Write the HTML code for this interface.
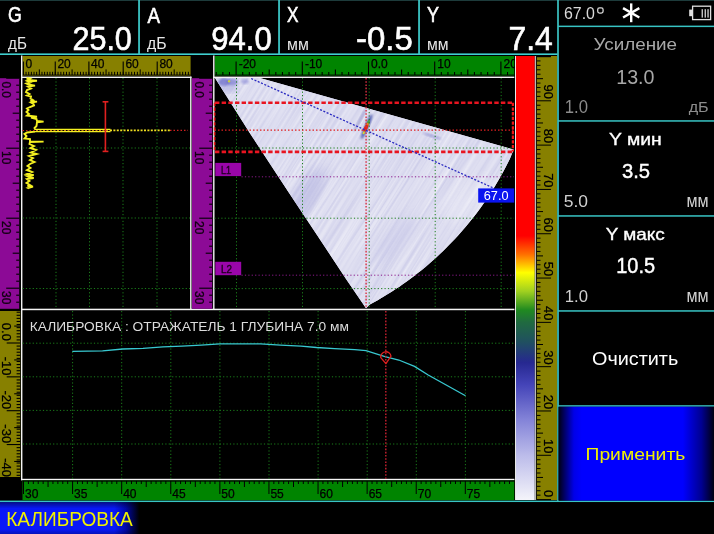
<!DOCTYPE html>
<html><head><meta charset="utf-8"><style>
html,body{margin:0;padding:0;background:#000;}
body{width:714px;height:534px;overflow:hidden;position:relative;}
svg{position:absolute;left:0;top:0;font-family:"Liberation Sans",sans-serif;will-change:transform;}
</style></head><body>
<svg width="714" height="534" viewBox="0 0 714 534">
<defs>
<linearGradient id="cbar" x1="0" y1="0" x2="0" y2="1">
<stop offset="0" stop-color="#ff0000"/><stop offset="0.405" stop-color="#ff0000"/>
<stop offset="0.447" stop-color="#ff7000"/><stop offset="0.488" stop-color="#ffff00"/>
<stop offset="0.53" stop-color="#a0d020"/><stop offset="0.572" stop-color="#208a20"/>
<stop offset="0.6" stop-color="#206a40"/><stop offset="0.644" stop-color="#205060"/><stop offset="0.69" stop-color="#262890"/>
<stop offset="0.74" stop-color="#4444b8"/><stop offset="0.82" stop-color="#8484d8"/>
<stop offset="0.9" stop-color="#bcbcea"/><stop offset="1" stop-color="#f4f4fa"/>
</linearGradient>
<linearGradient id="btn" x1="558.4" y1="0" x2="714" y2="0" gradientUnits="userSpaceOnUse">
<stop offset="0" stop-color="#000010"/><stop offset="0.04" stop-color="#000068"/><stop offset="0.1" stop-color="#0000e8"/>
<stop offset="0.15" stop-color="#0000ff"/><stop offset="0.8" stop-color="#0000ff"/>
<stop offset="0.92" stop-color="#000090"/><stop offset="1" stop-color="#000010"/>
</linearGradient>
<linearGradient id="stat" x1="0" y1="0" x2="714" y2="0" gradientUnits="userSpaceOnUse">
<stop offset="0" stop-color="#0818f8"/><stop offset="0.16" stop-color="#0818f8"/>
<stop offset="0.176" stop-color="#0008a8"/><stop offset="0.195" stop-color="#000000"/>
</linearGradient>
<linearGradient id="statv" x1="0" y1="0" x2="0" y2="1">
<stop offset="0" stop-color="#000" stop-opacity="0.45"/><stop offset="0.2" stop-color="#000" stop-opacity="0"/>
<stop offset="0.85" stop-color="#000" stop-opacity="0"/><stop offset="1" stop-color="#000" stop-opacity="0.25"/>
</linearGradient>
<linearGradient id="fang" x1="0" y1="0" x2="1" y2="1">
<stop offset="0" stop-color="#c8c8ec"/><stop offset="0.3" stop-color="#dcdcf2"/><stop offset="1" stop-color="#e4e4f4"/>
</linearGradient>
<pattern id="streaks" width="6" height="6" patternUnits="userSpaceOnUse" patternTransform="rotate(35)">
<rect width="6" height="6" fill="none"/><rect width="1.5" height="6" fill="#b8b8e0"/>
</pattern>
<linearGradient id="fanwhite" x1="214" y1="0" x2="514" y2="0" gradientUnits="userSpaceOnUse">
<stop offset="0" stop-color="#e8e8f6" stop-opacity="0"/><stop offset="0.35" stop-color="#e8e8f6" stop-opacity="0.15"/><stop offset="1" stop-color="#ececf8" stop-opacity="0.6"/>
</linearGradient>
<filter id="blur1"><feGaussianBlur stdDeviation="1"/></filter>
<filter id="blur2"><feGaussianBlur stdDeviation="2.5"/></filter>
<filter id="blur4" x="-50%" y="-50%" width="200%" height="200%"><feGaussianBlur stdDeviation="6"/></filter>
<filter id="streakf" x="0" y="0" width="100%" height="100%" filterUnits="objectBoundingBox" color-interpolation-filters="sRGB">
<feTurbulence type="fractalNoise" baseFrequency="0.008 0.4" numOctaves="2" seed="7"/>
<feColorMatrix type="matrix" values="0.18 0 0 0 0.775  0.18 0 0 0 0.775  0.08 0 0 0 0.9  0 0 0 0 1"/>
</filter>
</defs>
<rect width="714" height="534" fill="#000"/>
<rect x="0.00" y="0.00" width="714.00" height="1.00" fill="#1d3b3b" />
<rect x="0.00" y="53.40" width="557.50" height="1.60" fill="#3fcfcf" />
<rect x="138.20" y="0.00" width="1.70" height="54.00" fill="#3fcfcf" />
<rect x="278.20" y="0.00" width="1.70" height="54.00" fill="#3fcfcf" />
<rect x="418.20" y="0.00" width="1.70" height="54.00" fill="#3fcfcf" />
<rect x="557.20" y="0.00" width="1.60" height="501.50" fill="#3fcfcf" />
<rect x="558.00" y="25.60" width="156.00" height="1.50" fill="#38c4c4" />
<rect x="558.00" y="120.20" width="156.00" height="1.50" fill="#38c4c4" />
<rect x="558.00" y="215.20" width="156.00" height="1.50" fill="#38c4c4" />
<rect x="558.00" y="310.20" width="156.00" height="1.50" fill="#38c4c4" />
<rect x="558.00" y="405.20" width="156.00" height="1.50" fill="#38c4c4" />
<rect x="0.00" y="500.60" width="714.00" height="1.60" fill="#38c4c4" />
<text transform="translate(7.90,22.28) scale(0.795,1)" font-size="22.32" font-weight="normal" fill="#ffffff" stroke="#ffffff" stroke-width="0.6">G</text>
<text transform="translate(8.00,48.91) scale(0.895,1)" font-size="17.02" font-weight="normal" fill="#e8e8e8" >дБ</text>
<text transform="translate(72.40,50.07) scale(0.921,1)" font-size="33.19" font-weight="normal" fill="#ffffff" stroke="#ffffff" stroke-width="0.6">25.0</text>
<text transform="translate(147.50,22.50) scale(0.848,1)" font-size="22.09" font-weight="normal" fill="#ffffff" stroke="#ffffff" stroke-width="0.6">A</text>
<text transform="translate(147.00,48.91) scale(0.928,1)" font-size="17.02" font-weight="normal" fill="#e8e8e8" >дБ</text>
<text transform="translate(211.20,49.98) scale(0.957,1)" font-size="32.49" font-weight="normal" fill="#ffffff" stroke="#ffffff" stroke-width="0.6">94.0</text>
<text transform="translate(287.00,22.40) scale(0.770,1)" font-size="22.38" font-weight="normal" fill="#ffffff" stroke="#ffffff" stroke-width="0.6">X</text>
<text transform="translate(287.00,50.40) scale(0.910,1)" font-size="17.42" font-weight="normal" fill="#e8e8e8" >мм</text>
<text transform="translate(356.10,49.77) scale(1.009,1)" font-size="32.63" font-weight="normal" fill="#ffffff" stroke="#ffffff" stroke-width="0.6">-0.5</text>
<text transform="translate(427.00,22.40) scale(0.804,1)" font-size="22.38" font-weight="normal" fill="#ffffff" stroke="#ffffff" stroke-width="0.6">Y</text>
<text transform="translate(427.00,50.40) scale(0.902,1)" font-size="17.42" font-weight="normal" fill="#e8e8e8" >мм</text>
<text transform="translate(508.40,50.00) scale(0.955,1)" font-size="33.43" font-weight="normal" fill="#ffffff" stroke="#ffffff" stroke-width="0.6">7.4</text>
<text transform="translate(563.90,19.03) scale(0.920,1)" font-size="17.37" font-weight="normal" fill="#d8d8d8" >67.0</text>
<rect x="597.7" y="7.9" width="5.4" height="5.2" rx="1.8" fill="none" stroke="#d8d8d8" stroke-width="1.3"/>
<line x1="631.20" y1="3.40" x2="631.20" y2="22.20" stroke="#ffffff" stroke-width="2.4" />
<line x1="623.06" y1="8.10" x2="639.34" y2="17.50" stroke="#ffffff" stroke-width="2.4" />
<line x1="639.34" y1="8.10" x2="623.06" y2="17.50" stroke="#ffffff" stroke-width="2.4" />
<rect x="692.6" y="6.2" width="18" height="13.4" fill="none" stroke="#e0e0e0" stroke-width="1.3"/>
<rect x="689.20" y="9.60" width="3.40" height="6.60" fill="#e0e0e0" />
<rect x="701.60" y="9.20" width="1.30" height="8.40" fill="#d8d8d8" />
<rect x="704.60" y="9.20" width="1.30" height="8.40" fill="#d8d8d8" />
<rect x="707.40" y="9.20" width="1.30" height="8.40" fill="#d8d8d8" />
<text transform="translate(593.60,50.14) scale(1.144,1)" font-size="16.48" font-weight="normal" fill="#a8a8a8" >Усиление</text>
<text transform="translate(616.20,83.79) scale(0.935,1)" font-size="21.05" font-weight="normal" fill="#a8a8a8" >13.0</text>
<text transform="translate(564.80,112.82) scale(0.916,1)" font-size="18.22" font-weight="normal" fill="#8c8c8c" >1.0</text>
<text transform="translate(688.70,111.52) scale(1.076,1)" font-size="14.99" font-weight="normal" fill="#8c8c8c" >дБ</text>
<text transform="translate(609.10,144.80) scale(1.199,1)" font-size="16.13" font-weight="normal" fill="#ffffff" stroke="#ffffff" stroke-width="0.35">Y мин</text>
<text transform="translate(621.90,177.79) scale(0.961,1)" font-size="21.05" font-weight="normal" fill="#ffffff" stroke="#ffffff" stroke-width="0.45">3.5</text>
<text transform="translate(563.70,207.23) scale(1.015,1)" font-size="17.23" font-weight="normal" fill="#d0d0d0" >5.0</text>
<text transform="translate(686.50,207.40) scale(0.897,1)" font-size="17.99" font-weight="normal" fill="#d0d0d0" >мм</text>
<text transform="translate(605.80,239.64) scale(1.190,1)" font-size="15.90" font-weight="normal" fill="#ffffff" stroke="#ffffff" stroke-width="0.35">Y макс</text>
<text transform="translate(616.20,273.38) scale(0.913,1)" font-size="21.89" font-weight="normal" fill="#ffffff" stroke="#ffffff" stroke-width="0.45">10.5</text>
<text transform="translate(564.80,302.23) scale(0.969,1)" font-size="17.23" font-weight="normal" fill="#d0d0d0" >1.0</text>
<text transform="translate(686.50,302.40) scale(0.897,1)" font-size="17.99" font-weight="normal" fill="#d0d0d0" >мм</text>
<text transform="translate(592.00,364.92) scale(1.114,1)" font-size="17.80" font-weight="normal" fill="#ffffff" >Очистить</text>
<rect x="558.4" y="406.7" width="155.6" height="93.9" fill="url(#btn)"/>
<text transform="translate(585.50,459.90) scale(1.117,1)" font-size="17.30" font-weight="normal" fill="#f0f000" >Применить</text>
<rect x="0" y="502.2" width="714" height="31.8" fill="url(#stat)"/><rect x="0" y="502.2" width="150" height="31.8" fill="url(#statv)"/>
<text transform="translate(6.20,526.20) scale(0.965,1)" font-size="19.77" font-weight="normal" fill="#f0f000" >КАЛИБРОВКА</text>
<rect x="22.60" y="56.00" width="168.00" height="20.00" fill="#878000" />
<rect x="22.60" y="74.60" width="168.00" height="1.00" fill="#000" />
<line x1="23.40" y1="71.80" x2="23.40" y2="75.00" stroke="#000" stroke-width="1.0" />
<line x1="26.05" y1="71.80" x2="26.05" y2="75.00" stroke="#000" stroke-width="1.0" />
<line x1="28.71" y1="71.80" x2="28.71" y2="75.00" stroke="#000" stroke-width="1.0" />
<line x1="31.36" y1="71.80" x2="31.36" y2="75.00" stroke="#000" stroke-width="1.0" />
<line x1="34.02" y1="71.80" x2="34.02" y2="75.00" stroke="#000" stroke-width="1.0" />
<line x1="36.67" y1="71.80" x2="36.67" y2="75.00" stroke="#000" stroke-width="1.0" />
<line x1="39.33" y1="69.40" x2="39.33" y2="75.00" stroke="#000" stroke-width="1.0" />
<line x1="41.98" y1="71.80" x2="41.98" y2="75.00" stroke="#000" stroke-width="1.0" />
<line x1="44.63" y1="71.80" x2="44.63" y2="75.00" stroke="#000" stroke-width="1.0" />
<line x1="47.29" y1="71.80" x2="47.29" y2="75.00" stroke="#000" stroke-width="1.0" />
<line x1="49.94" y1="71.80" x2="49.94" y2="75.00" stroke="#000" stroke-width="1.0" />
<line x1="52.60" y1="71.80" x2="52.60" y2="75.00" stroke="#000" stroke-width="1.0" />
<line x1="55.25" y1="71.80" x2="55.25" y2="75.00" stroke="#000" stroke-width="1.0" />
<line x1="58.05" y1="71.80" x2="58.05" y2="75.00" stroke="#000" stroke-width="1.0" />
<line x1="60.86" y1="71.80" x2="60.86" y2="75.00" stroke="#000" stroke-width="1.0" />
<line x1="63.66" y1="71.80" x2="63.66" y2="75.00" stroke="#000" stroke-width="1.0" />
<line x1="66.47" y1="71.80" x2="66.47" y2="75.00" stroke="#000" stroke-width="1.0" />
<line x1="69.27" y1="71.80" x2="69.27" y2="75.00" stroke="#000" stroke-width="1.0" />
<line x1="72.08" y1="69.40" x2="72.08" y2="75.00" stroke="#000" stroke-width="1.0" />
<line x1="74.88" y1="71.80" x2="74.88" y2="75.00" stroke="#000" stroke-width="1.0" />
<line x1="77.68" y1="71.80" x2="77.68" y2="75.00" stroke="#000" stroke-width="1.0" />
<line x1="80.49" y1="71.80" x2="80.49" y2="75.00" stroke="#000" stroke-width="1.0" />
<line x1="83.29" y1="71.80" x2="83.29" y2="75.00" stroke="#000" stroke-width="1.0" />
<line x1="86.10" y1="71.80" x2="86.10" y2="75.00" stroke="#000" stroke-width="1.0" />
<line x1="88.90" y1="71.80" x2="88.90" y2="75.00" stroke="#000" stroke-width="1.0" />
<line x1="91.76" y1="71.80" x2="91.76" y2="75.00" stroke="#000" stroke-width="1.0" />
<line x1="94.62" y1="71.80" x2="94.62" y2="75.00" stroke="#000" stroke-width="1.0" />
<line x1="97.48" y1="71.80" x2="97.48" y2="75.00" stroke="#000" stroke-width="1.0" />
<line x1="100.33" y1="71.80" x2="100.33" y2="75.00" stroke="#000" stroke-width="1.0" />
<line x1="103.19" y1="71.80" x2="103.19" y2="75.00" stroke="#000" stroke-width="1.0" />
<line x1="106.05" y1="69.40" x2="106.05" y2="75.00" stroke="#000" stroke-width="1.0" />
<line x1="108.91" y1="71.80" x2="108.91" y2="75.00" stroke="#000" stroke-width="1.0" />
<line x1="111.77" y1="71.80" x2="111.77" y2="75.00" stroke="#000" stroke-width="1.0" />
<line x1="114.62" y1="71.80" x2="114.62" y2="75.00" stroke="#000" stroke-width="1.0" />
<line x1="117.48" y1="71.80" x2="117.48" y2="75.00" stroke="#000" stroke-width="1.0" />
<line x1="120.34" y1="71.80" x2="120.34" y2="75.00" stroke="#000" stroke-width="1.0" />
<line x1="123.20" y1="71.80" x2="123.20" y2="75.00" stroke="#000" stroke-width="1.0" />
<line x1="126.03" y1="71.80" x2="126.03" y2="75.00" stroke="#000" stroke-width="1.0" />
<line x1="128.87" y1="71.80" x2="128.87" y2="75.00" stroke="#000" stroke-width="1.0" />
<line x1="131.70" y1="71.80" x2="131.70" y2="75.00" stroke="#000" stroke-width="1.0" />
<line x1="134.53" y1="71.80" x2="134.53" y2="75.00" stroke="#000" stroke-width="1.0" />
<line x1="137.37" y1="71.80" x2="137.37" y2="75.00" stroke="#000" stroke-width="1.0" />
<line x1="140.20" y1="69.40" x2="140.20" y2="75.00" stroke="#000" stroke-width="1.0" />
<line x1="143.03" y1="71.80" x2="143.03" y2="75.00" stroke="#000" stroke-width="1.0" />
<line x1="145.87" y1="71.80" x2="145.87" y2="75.00" stroke="#000" stroke-width="1.0" />
<line x1="148.70" y1="71.80" x2="148.70" y2="75.00" stroke="#000" stroke-width="1.0" />
<line x1="151.53" y1="71.80" x2="151.53" y2="75.00" stroke="#000" stroke-width="1.0" />
<line x1="154.37" y1="71.80" x2="154.37" y2="75.00" stroke="#000" stroke-width="1.0" />
<line x1="157.20" y1="71.80" x2="157.20" y2="75.00" stroke="#000" stroke-width="1.0" />
<line x1="160.03" y1="71.80" x2="160.03" y2="75.00" stroke="#000" stroke-width="1.0" />
<line x1="162.87" y1="71.80" x2="162.87" y2="75.00" stroke="#000" stroke-width="1.0" />
<line x1="165.70" y1="71.80" x2="165.70" y2="75.00" stroke="#000" stroke-width="1.0" />
<line x1="168.53" y1="71.80" x2="168.53" y2="75.00" stroke="#000" stroke-width="1.0" />
<line x1="171.37" y1="71.80" x2="171.37" y2="75.00" stroke="#000" stroke-width="1.0" />
<line x1="174.20" y1="69.40" x2="174.20" y2="75.00" stroke="#000" stroke-width="1.0" />
<line x1="177.03" y1="71.80" x2="177.03" y2="75.00" stroke="#000" stroke-width="1.0" />
<line x1="179.87" y1="71.80" x2="179.87" y2="75.00" stroke="#000" stroke-width="1.0" />
<line x1="182.70" y1="71.80" x2="182.70" y2="75.00" stroke="#000" stroke-width="1.0" />
<line x1="185.53" y1="71.80" x2="185.53" y2="75.00" stroke="#000" stroke-width="1.0" />
<line x1="188.37" y1="71.80" x2="188.37" y2="75.00" stroke="#000" stroke-width="1.0" />
<line x1="23.40" y1="61.60" x2="23.40" y2="75.00" stroke="#000" stroke-width="1.1" />
<text x="25.60" y="67.70" font-size="12" fill="#000" text-anchor="start" stroke="#000" stroke-width="0.25">0</text>
<line x1="55.25" y1="61.60" x2="55.25" y2="75.00" stroke="#000" stroke-width="1.1" />
<text x="57.45" y="67.70" font-size="12" fill="#000" text-anchor="start" stroke="#000" stroke-width="0.25">20</text>
<line x1="88.90" y1="61.60" x2="88.90" y2="75.00" stroke="#000" stroke-width="1.1" />
<text x="91.10" y="67.70" font-size="12" fill="#000" text-anchor="start" stroke="#000" stroke-width="0.25">40</text>
<line x1="123.20" y1="61.60" x2="123.20" y2="75.00" stroke="#000" stroke-width="1.1" />
<text x="125.40" y="67.70" font-size="12" fill="#000" text-anchor="start" stroke="#000" stroke-width="0.25">60</text>
<line x1="157.20" y1="61.60" x2="157.20" y2="75.00" stroke="#000" stroke-width="1.1" />
<text x="159.40" y="67.70" font-size="12" fill="#000" text-anchor="start" stroke="#000" stroke-width="0.25">80</text>
<rect x="21.00" y="55.50" width="1.40" height="254.50" fill="#f4f4f4" />
<rect x="21.00" y="76.60" width="170.40" height="1.40" fill="#f4f4f4" />
<rect x="190.10" y="76.60" width="1.40" height="233.00" fill="#f4f4f4" />
<rect x="21.00" y="308.70" width="493.40" height="1.50" fill="#f4f4f4" />
<rect x="0.00" y="78.20" width="19.20" height="230.60" fill="#8c0a96" />
<rect x="192.00" y="78.20" width="20.20" height="230.60" fill="#8c0a96" />
<line x1="6.20" y1="78.20" x2="19.20" y2="78.20" stroke="#000" stroke-width="1.1" />
<line x1="16.20" y1="85.20" x2="19.20" y2="85.20" stroke="#000" stroke-width="1.1" />
<line x1="16.20" y1="92.20" x2="19.20" y2="92.20" stroke="#000" stroke-width="1.1" />
<line x1="16.20" y1="99.20" x2="19.20" y2="99.20" stroke="#000" stroke-width="1.1" />
<line x1="16.20" y1="106.20" x2="19.20" y2="106.20" stroke="#000" stroke-width="1.1" />
<line x1="12.70" y1="113.20" x2="19.20" y2="113.20" stroke="#000" stroke-width="1.1" />
<line x1="16.20" y1="120.20" x2="19.20" y2="120.20" stroke="#000" stroke-width="1.1" />
<line x1="16.20" y1="127.20" x2="19.20" y2="127.20" stroke="#000" stroke-width="1.1" />
<line x1="16.20" y1="134.20" x2="19.20" y2="134.20" stroke="#000" stroke-width="1.1" />
<line x1="16.20" y1="141.20" x2="19.20" y2="141.20" stroke="#000" stroke-width="1.1" />
<line x1="6.20" y1="148.20" x2="19.20" y2="148.20" stroke="#000" stroke-width="1.1" />
<line x1="16.20" y1="155.20" x2="19.20" y2="155.20" stroke="#000" stroke-width="1.1" />
<line x1="16.20" y1="162.20" x2="19.20" y2="162.20" stroke="#000" stroke-width="1.1" />
<line x1="16.20" y1="169.20" x2="19.20" y2="169.20" stroke="#000" stroke-width="1.1" />
<line x1="16.20" y1="176.20" x2="19.20" y2="176.20" stroke="#000" stroke-width="1.1" />
<line x1="12.70" y1="183.20" x2="19.20" y2="183.20" stroke="#000" stroke-width="1.1" />
<line x1="16.20" y1="190.20" x2="19.20" y2="190.20" stroke="#000" stroke-width="1.1" />
<line x1="16.20" y1="197.20" x2="19.20" y2="197.20" stroke="#000" stroke-width="1.1" />
<line x1="16.20" y1="204.20" x2="19.20" y2="204.20" stroke="#000" stroke-width="1.1" />
<line x1="16.20" y1="211.20" x2="19.20" y2="211.20" stroke="#000" stroke-width="1.1" />
<line x1="6.20" y1="218.20" x2="19.20" y2="218.20" stroke="#000" stroke-width="1.1" />
<line x1="16.20" y1="225.20" x2="19.20" y2="225.20" stroke="#000" stroke-width="1.1" />
<line x1="16.20" y1="232.20" x2="19.20" y2="232.20" stroke="#000" stroke-width="1.1" />
<line x1="16.20" y1="239.20" x2="19.20" y2="239.20" stroke="#000" stroke-width="1.1" />
<line x1="16.20" y1="246.20" x2="19.20" y2="246.20" stroke="#000" stroke-width="1.1" />
<line x1="12.70" y1="253.20" x2="19.20" y2="253.20" stroke="#000" stroke-width="1.1" />
<line x1="16.20" y1="260.20" x2="19.20" y2="260.20" stroke="#000" stroke-width="1.1" />
<line x1="16.20" y1="267.20" x2="19.20" y2="267.20" stroke="#000" stroke-width="1.1" />
<line x1="16.20" y1="274.20" x2="19.20" y2="274.20" stroke="#000" stroke-width="1.1" />
<line x1="16.20" y1="281.20" x2="19.20" y2="281.20" stroke="#000" stroke-width="1.1" />
<line x1="6.20" y1="288.20" x2="19.20" y2="288.20" stroke="#000" stroke-width="1.1" />
<line x1="16.20" y1="295.20" x2="19.20" y2="295.20" stroke="#000" stroke-width="1.1" />
<line x1="16.20" y1="302.20" x2="19.20" y2="302.20" stroke="#000" stroke-width="1.1" />
<text transform="translate(1.80,81.40) rotate(90)" font-size="11.9" fill="#100010" stroke="#100010" stroke-width="0.3">0.0</text>
<text transform="translate(1.80,151.10) rotate(90)" font-size="11.9" fill="#100010" stroke="#100010" stroke-width="0.3">10</text>
<text transform="translate(1.80,221.10) rotate(90)" font-size="11.9" fill="#100010" stroke="#100010" stroke-width="0.3">20</text>
<text transform="translate(1.80,291.10) rotate(90)" font-size="11.9" fill="#100010" stroke="#100010" stroke-width="0.3">30</text>
<line x1="199.20" y1="78.20" x2="212.20" y2="78.20" stroke="#000" stroke-width="1.1" />
<line x1="209.20" y1="85.20" x2="212.20" y2="85.20" stroke="#000" stroke-width="1.1" />
<line x1="209.20" y1="92.20" x2="212.20" y2="92.20" stroke="#000" stroke-width="1.1" />
<line x1="209.20" y1="99.20" x2="212.20" y2="99.20" stroke="#000" stroke-width="1.1" />
<line x1="209.20" y1="106.20" x2="212.20" y2="106.20" stroke="#000" stroke-width="1.1" />
<line x1="205.70" y1="113.20" x2="212.20" y2="113.20" stroke="#000" stroke-width="1.1" />
<line x1="209.20" y1="120.20" x2="212.20" y2="120.20" stroke="#000" stroke-width="1.1" />
<line x1="209.20" y1="127.20" x2="212.20" y2="127.20" stroke="#000" stroke-width="1.1" />
<line x1="209.20" y1="134.20" x2="212.20" y2="134.20" stroke="#000" stroke-width="1.1" />
<line x1="209.20" y1="141.20" x2="212.20" y2="141.20" stroke="#000" stroke-width="1.1" />
<line x1="199.20" y1="148.20" x2="212.20" y2="148.20" stroke="#000" stroke-width="1.1" />
<line x1="209.20" y1="155.20" x2="212.20" y2="155.20" stroke="#000" stroke-width="1.1" />
<line x1="209.20" y1="162.20" x2="212.20" y2="162.20" stroke="#000" stroke-width="1.1" />
<line x1="209.20" y1="169.20" x2="212.20" y2="169.20" stroke="#000" stroke-width="1.1" />
<line x1="209.20" y1="176.20" x2="212.20" y2="176.20" stroke="#000" stroke-width="1.1" />
<line x1="205.70" y1="183.20" x2="212.20" y2="183.20" stroke="#000" stroke-width="1.1" />
<line x1="209.20" y1="190.20" x2="212.20" y2="190.20" stroke="#000" stroke-width="1.1" />
<line x1="209.20" y1="197.20" x2="212.20" y2="197.20" stroke="#000" stroke-width="1.1" />
<line x1="209.20" y1="204.20" x2="212.20" y2="204.20" stroke="#000" stroke-width="1.1" />
<line x1="209.20" y1="211.20" x2="212.20" y2="211.20" stroke="#000" stroke-width="1.1" />
<line x1="199.20" y1="218.20" x2="212.20" y2="218.20" stroke="#000" stroke-width="1.1" />
<line x1="209.20" y1="225.20" x2="212.20" y2="225.20" stroke="#000" stroke-width="1.1" />
<line x1="209.20" y1="232.20" x2="212.20" y2="232.20" stroke="#000" stroke-width="1.1" />
<line x1="209.20" y1="239.20" x2="212.20" y2="239.20" stroke="#000" stroke-width="1.1" />
<line x1="209.20" y1="246.20" x2="212.20" y2="246.20" stroke="#000" stroke-width="1.1" />
<line x1="205.70" y1="253.20" x2="212.20" y2="253.20" stroke="#000" stroke-width="1.1" />
<line x1="209.20" y1="260.20" x2="212.20" y2="260.20" stroke="#000" stroke-width="1.1" />
<line x1="209.20" y1="267.20" x2="212.20" y2="267.20" stroke="#000" stroke-width="1.1" />
<line x1="209.20" y1="274.20" x2="212.20" y2="274.20" stroke="#000" stroke-width="1.1" />
<line x1="209.20" y1="281.20" x2="212.20" y2="281.20" stroke="#000" stroke-width="1.1" />
<line x1="199.20" y1="288.20" x2="212.20" y2="288.20" stroke="#000" stroke-width="1.1" />
<line x1="209.20" y1="295.20" x2="212.20" y2="295.20" stroke="#000" stroke-width="1.1" />
<line x1="209.20" y1="302.20" x2="212.20" y2="302.20" stroke="#000" stroke-width="1.1" />
<text transform="translate(194.80,81.40) rotate(90)" font-size="11.9" fill="#100010" stroke="#100010" stroke-width="0.3">0.0</text>
<text transform="translate(194.80,151.10) rotate(90)" font-size="11.9" fill="#100010" stroke="#100010" stroke-width="0.3">10</text>
<text transform="translate(194.80,221.10) rotate(90)" font-size="11.9" fill="#100010" stroke="#100010" stroke-width="0.3">20</text>
<text transform="translate(194.80,291.10) rotate(90)" font-size="11.9" fill="#100010" stroke="#100010" stroke-width="0.3">30</text>
<line x1="56.00" y1="78.00" x2="56.00" y2="308.80" stroke="#1a7e1a" stroke-width="1" stroke-dasharray="1.2 2.2"/>
<line x1="89.50" y1="78.00" x2="89.50" y2="308.80" stroke="#1a7e1a" stroke-width="1" stroke-dasharray="1.2 2.2"/>
<line x1="123.00" y1="78.00" x2="123.00" y2="308.80" stroke="#1a7e1a" stroke-width="1" stroke-dasharray="1.2 2.2"/>
<line x1="157.00" y1="78.00" x2="157.00" y2="308.80" stroke="#1a7e1a" stroke-width="1" stroke-dasharray="1.2 2.2"/>
<line x1="22.50" y1="148.00" x2="190.00" y2="148.00" stroke="#1a7e1a" stroke-width="1" stroke-dasharray="1.2 2.2"/>
<line x1="22.50" y1="218.00" x2="190.00" y2="218.00" stroke="#1a7e1a" stroke-width="1" stroke-dasharray="1.2 2.2"/>
<line x1="22.50" y1="288.50" x2="190.00" y2="288.50" stroke="#1a7e1a" stroke-width="1" stroke-dasharray="1.2 2.2"/>
<polyline points="26.5,78.0 30.0,78.5 27.5,80.0 37.0,80.8 28.0,81.5 30.0,82.5 26.5,83.5 28.5,84.5 35.0,85.6 28.0,86.5 31.0,88.5 27.0,90.0 26.0,92.0 29.5,94.0 27.0,95.5 31.0,96.5 30.5,98.5 33.0,100.0 30.5,101.0 37.0,101.6 31.0,102.5 33.5,104.0 34.0,105.5 30.0,107.0 27.0,108.5 28.5,110.0 26.5,112.0 29.0,114.0 27.0,115.5 31.0,116.0 37.0,116.8 31.0,117.5 36.5,119.0 37.0,121.0 43.6,121.6 37.0,122.2 36.5,126.0 34.5,128.0 35.0,129.5" fill="none" stroke="#f4f020" stroke-width="1.9" stroke-linejoin="miter"/>
<polyline points="35.0,131.6 27.0,132.5 24.5,134.0 26.5,136.0 24.5,138.5 30.0,139.0 30.0,141.5 43.6,141.6 30.0,142.0 29.5,144.0 34.0,146.0 30.5,148.0 36.0,150.0 31.0,152.5 36.5,154.0 29.0,156.0 33.0,158.0 30.0,160.0 34.5,162.0 30.0,164.0 27.5,166.0 30.5,168.0 27.0,170.0 32.0,172.0 27.0,174.0 33.7,175.0 27.0,176.0 29.0,177.0 33.7,178.0 27.0,179.0 29.5,181.0 26.5,183.0 30.0,185.0 27.5,186.0 33.0,186.5 28.0,188.0 29.0,188.5" fill="none" stroke="#f4f020" stroke-width="1.9" stroke-linejoin="miter"/>
<line x1="22.50" y1="130.50" x2="35.00" y2="130.50" stroke="#c02020" stroke-width="1.0" stroke-dasharray="1.5 2"/>
<line x1="34.50" y1="129.30" x2="110.50" y2="129.30" stroke="#f4f020" stroke-width="1.3" />
<line x1="34.50" y1="131.70" x2="110.50" y2="131.70" stroke="#f4f020" stroke-width="1.3" />
<line x1="36.00" y1="130.50" x2="110.00" y2="130.50" stroke="#d08010" stroke-width="1.0" stroke-dasharray="2 1.5"/>
<line x1="110.00" y1="130.40" x2="170.00" y2="130.40" stroke="#f0e020" stroke-width="1.6" stroke-dasharray="2 1.4"/>
<line x1="170.00" y1="130.30" x2="188.00" y2="130.30" stroke="#d02020" stroke-width="1.2" stroke-dasharray="1.5 2"/>
<line x1="105.40" y1="101.60" x2="105.40" y2="151.60" stroke="#e02020" stroke-width="1.6" />
<line x1="102.60" y1="101.80" x2="108.40" y2="101.80" stroke="#e02020" stroke-width="1.6" />
<line x1="102.60" y1="151.40" x2="108.40" y2="151.40" stroke="#e02020" stroke-width="1.6" />
<rect x="214.80" y="56.00" width="299.40" height="20.00" fill="#008400" />
<rect x="214.80" y="74.60" width="299.40" height="1.00" fill="#000" />
<rect x="213.10" y="55.50" width="1.40" height="254.50" fill="#f4f4f4" />
<rect x="213.10" y="76.60" width="301.20" height="1.40" fill="#f4f4f4" />
<line x1="216.24" y1="72.00" x2="216.24" y2="75.00" stroke="#000" stroke-width="1.1" />
<line x1="222.86" y1="72.00" x2="222.86" y2="75.00" stroke="#000" stroke-width="1.1" />
<line x1="229.48" y1="72.00" x2="229.48" y2="75.00" stroke="#000" stroke-width="1.1" />
<line x1="236.10" y1="61.60" x2="236.10" y2="75.00" stroke="#000" stroke-width="1.1" />
<line x1="242.72" y1="72.00" x2="242.72" y2="75.00" stroke="#000" stroke-width="1.1" />
<line x1="249.34" y1="72.00" x2="249.34" y2="75.00" stroke="#000" stroke-width="1.1" />
<line x1="255.96" y1="72.00" x2="255.96" y2="75.00" stroke="#000" stroke-width="1.1" />
<line x1="262.58" y1="72.00" x2="262.58" y2="75.00" stroke="#000" stroke-width="1.1" />
<line x1="269.20" y1="69.40" x2="269.20" y2="75.00" stroke="#000" stroke-width="1.1" />
<line x1="275.82" y1="72.00" x2="275.82" y2="75.00" stroke="#000" stroke-width="1.1" />
<line x1="282.44" y1="72.00" x2="282.44" y2="75.00" stroke="#000" stroke-width="1.1" />
<line x1="289.06" y1="72.00" x2="289.06" y2="75.00" stroke="#000" stroke-width="1.1" />
<line x1="295.68" y1="72.00" x2="295.68" y2="75.00" stroke="#000" stroke-width="1.1" />
<line x1="302.30" y1="61.60" x2="302.30" y2="75.00" stroke="#000" stroke-width="1.1" />
<line x1="308.92" y1="72.00" x2="308.92" y2="75.00" stroke="#000" stroke-width="1.1" />
<line x1="315.54" y1="72.00" x2="315.54" y2="75.00" stroke="#000" stroke-width="1.1" />
<line x1="322.16" y1="72.00" x2="322.16" y2="75.00" stroke="#000" stroke-width="1.1" />
<line x1="328.78" y1="72.00" x2="328.78" y2="75.00" stroke="#000" stroke-width="1.1" />
<line x1="335.40" y1="69.40" x2="335.40" y2="75.00" stroke="#000" stroke-width="1.1" />
<line x1="342.02" y1="72.00" x2="342.02" y2="75.00" stroke="#000" stroke-width="1.1" />
<line x1="348.64" y1="72.00" x2="348.64" y2="75.00" stroke="#000" stroke-width="1.1" />
<line x1="355.26" y1="72.00" x2="355.26" y2="75.00" stroke="#000" stroke-width="1.1" />
<line x1="361.88" y1="72.00" x2="361.88" y2="75.00" stroke="#000" stroke-width="1.1" />
<line x1="368.50" y1="61.60" x2="368.50" y2="75.00" stroke="#000" stroke-width="1.1" />
<line x1="375.12" y1="72.00" x2="375.12" y2="75.00" stroke="#000" stroke-width="1.1" />
<line x1="381.74" y1="72.00" x2="381.74" y2="75.00" stroke="#000" stroke-width="1.1" />
<line x1="388.36" y1="72.00" x2="388.36" y2="75.00" stroke="#000" stroke-width="1.1" />
<line x1="394.98" y1="72.00" x2="394.98" y2="75.00" stroke="#000" stroke-width="1.1" />
<line x1="401.60" y1="69.40" x2="401.60" y2="75.00" stroke="#000" stroke-width="1.1" />
<line x1="408.22" y1="72.00" x2="408.22" y2="75.00" stroke="#000" stroke-width="1.1" />
<line x1="414.84" y1="72.00" x2="414.84" y2="75.00" stroke="#000" stroke-width="1.1" />
<line x1="421.46" y1="72.00" x2="421.46" y2="75.00" stroke="#000" stroke-width="1.1" />
<line x1="428.08" y1="72.00" x2="428.08" y2="75.00" stroke="#000" stroke-width="1.1" />
<line x1="434.70" y1="61.60" x2="434.70" y2="75.00" stroke="#000" stroke-width="1.1" />
<line x1="441.32" y1="72.00" x2="441.32" y2="75.00" stroke="#000" stroke-width="1.1" />
<line x1="447.94" y1="72.00" x2="447.94" y2="75.00" stroke="#000" stroke-width="1.1" />
<line x1="454.56" y1="72.00" x2="454.56" y2="75.00" stroke="#000" stroke-width="1.1" />
<line x1="461.18" y1="72.00" x2="461.18" y2="75.00" stroke="#000" stroke-width="1.1" />
<line x1="467.80" y1="69.40" x2="467.80" y2="75.00" stroke="#000" stroke-width="1.1" />
<line x1="474.42" y1="72.00" x2="474.42" y2="75.00" stroke="#000" stroke-width="1.1" />
<line x1="481.04" y1="72.00" x2="481.04" y2="75.00" stroke="#000" stroke-width="1.1" />
<line x1="487.66" y1="72.00" x2="487.66" y2="75.00" stroke="#000" stroke-width="1.1" />
<line x1="494.28" y1="72.00" x2="494.28" y2="75.00" stroke="#000" stroke-width="1.1" />
<line x1="500.90" y1="61.60" x2="500.90" y2="75.00" stroke="#000" stroke-width="1.1" />
<line x1="507.52" y1="72.00" x2="507.52" y2="75.00" stroke="#000" stroke-width="1.1" />
<text x="238.70" y="67.90" font-size="12" fill="#000" text-anchor="start" stroke="#000" stroke-width="0.25">-20</text>
<text x="304.90" y="67.90" font-size="12" fill="#000" text-anchor="start" stroke="#000" stroke-width="0.25">-10</text>
<text x="371.10" y="67.90" font-size="12" fill="#000" text-anchor="start" stroke="#000" stroke-width="0.25">0.0</text>
<text x="437.30" y="67.90" font-size="12" fill="#000" text-anchor="start" stroke="#000" stroke-width="0.25">10</text>
<text x="503.50" y="67.90" font-size="12" fill="#000" text-anchor="start" stroke="#000" stroke-width="0.25">20</text>
<path d="M215.00,78.00 L260.00,78.00 L513.60,149.50 L509.92,158.77 L506.23,166.11 L502.55,173.02 L498.86,179.55 L495.18,185.76 L491.49,191.68 L487.81,197.33 L484.12,202.73 L480.44,207.92 L476.75,212.90 L473.06,217.69 L469.38,222.31 L465.69,226.76 L462.01,231.05 L458.32,235.20 L454.64,239.22 L450.95,243.10 L447.27,246.86 L443.59,250.51 L439.90,254.04 L436.22,257.46 L432.53,260.78 L428.85,264.00 L425.16,267.13 L421.48,270.17 L417.79,273.11 L414.11,275.98 L410.42,278.76 L406.74,281.46 L403.05,284.08 L399.37,286.63 L395.68,289.10 L392.00,291.50 L388.31,293.84 L384.62,296.10 L380.94,298.30 L377.25,300.44 L373.57,302.51 L369.88,304.52 L366.00,308.30 L346.70,280.00 L317.00,235.00 L287.10,190.00 L250.40,134.00 Z" fill="url(#fang)"/>
<g clip-path="url(#fanclip)"><g transform="rotate(-58 365 190)"><rect x="140" y="-40" width="460" height="460" filter="url(#streakf)"/></g><ellipse cx="224" cy="82" rx="6" ry="4" fill="#5050c0" opacity="0.6" filter="url(#blur1)"/><ellipse cx="232" cy="82" rx="6" ry="3.5" fill="#6060c8" opacity="0.55" filter="url(#blur1)"/><ellipse cx="245" cy="81.5" rx="4" ry="2.5" fill="#7878d0" opacity="0.5" filter="url(#blur1)"/><ellipse cx="228" cy="88" rx="10" ry="5" fill="#9090d8" opacity="0.35" filter="url(#blur2)"/><ellipse cx="305" cy="195" rx="32" ry="11" transform="rotate(-58 305 195)" fill="#a8a8dc" opacity="0.45" filter="url(#blur4)"/><ellipse cx="395" cy="240" rx="30" ry="9" transform="rotate(-50 395 240)" fill="#c0c0e6" opacity="0.4" filter="url(#blur4)"/><ellipse cx="360" cy="120" rx="13" ry="1.6" transform="rotate(-62 360 120)" fill="#6060b0" opacity="0.45" filter="url(#blur1)"/><ellipse cx="432" cy="136" rx="10" ry="1.4" transform="rotate(18 432 136)" fill="#6868c0" opacity="0.45" filter="url(#blur1)"/><ellipse cx="470" cy="200" rx="30" ry="14" transform="rotate(-40 470 200)" fill="#f4f4fa" opacity="0.35" filter="url(#blur4)"/><circle cx="229.1" cy="81.3" r="1.2" fill="#c8d040"/><g transform="translate(366.6,126.6) rotate(23)"><ellipse cx="0" cy="0" rx="2.2" ry="13.5" fill="#3848a8" opacity="0.85" filter="url(#blur1)"/><ellipse cx="0" cy="-3.5" rx="1.3" ry="4" fill="#50a040"/><ellipse cx="0" cy="-0.5" rx="1.5" ry="3.5" fill="#f07a20"/><ellipse cx="-0.2" cy="2" rx="1.8" ry="3.8" fill="#e02018"/><ellipse cx="-0.2" cy="6.8" rx="1" ry="1.6" fill="#d8d830"/></g></g>
<clipPath id="fanclip"><path d="M215.00,78.00 L260.00,78.00 L513.60,149.50 L509.92,158.77 L506.23,166.11 L502.55,173.02 L498.86,179.55 L495.18,185.76 L491.49,191.68 L487.81,197.33 L484.12,202.73 L480.44,207.92 L476.75,212.90 L473.06,217.69 L469.38,222.31 L465.69,226.76 L462.01,231.05 L458.32,235.20 L454.64,239.22 L450.95,243.10 L447.27,246.86 L443.59,250.51 L439.90,254.04 L436.22,257.46 L432.53,260.78 L428.85,264.00 L425.16,267.13 L421.48,270.17 L417.79,273.11 L414.11,275.98 L410.42,278.76 L406.74,281.46 L403.05,284.08 L399.37,286.63 L395.68,289.10 L392.00,291.50 L388.31,293.84 L384.62,296.10 L380.94,298.30 L377.25,300.44 L373.57,302.51 L369.88,304.52 L366.00,308.30 L346.70,280.00 L317.00,235.00 L287.10,190.00 L250.40,134.00 Z"/></clipPath>
<line x1="236.50" y1="78.00" x2="236.50" y2="309.00" stroke="#1a7e1a" stroke-width="1" stroke-dasharray="1.2 2.2"/>
<line x1="302.50" y1="78.00" x2="302.50" y2="309.00" stroke="#1a7e1a" stroke-width="1" stroke-dasharray="1.2 2.2"/>
<line x1="369.20" y1="78.00" x2="369.20" y2="309.00" stroke="#1a7e1a" stroke-width="1" stroke-dasharray="1.2 2.2"/>
<line x1="435.20" y1="78.00" x2="435.20" y2="309.00" stroke="#1a7e1a" stroke-width="1" stroke-dasharray="1.2 2.2"/>
<line x1="501.20" y1="78.00" x2="501.20" y2="309.00" stroke="#1a7e1a" stroke-width="1" stroke-dasharray="1.2 2.2"/>
<line x1="214.50" y1="148.00" x2="514.00" y2="148.00" stroke="#1a7e1a" stroke-width="1" stroke-dasharray="1.2 2.2"/>
<line x1="214.50" y1="218.20" x2="514.00" y2="218.20" stroke="#1a7e1a" stroke-width="1" stroke-dasharray="1.2 2.2"/>
<line x1="214.50" y1="288.60" x2="514.00" y2="288.60" stroke="#1a7e1a" stroke-width="1" stroke-dasharray="1.2 2.2"/>
<line x1="241.50" y1="176.80" x2="514.00" y2="176.80" stroke="#8c1a8c" stroke-width="1" stroke-dasharray="1.2 2.2"/>
<line x1="241.50" y1="275.20" x2="514.00" y2="275.20" stroke="#8c1a8c" stroke-width="1" stroke-dasharray="1.2 2.2"/>
<rect x="215.30" y="162.90" width="25.90" height="13.20" fill="#9a06aa" />
<rect x="215.30" y="261.80" width="25.90" height="13.40" fill="#9a06aa" />
<text transform="translate(221.00,173.80) scale(0.764,1)" font-size="11.77" font-weight="normal" fill="#200020" stroke="#200020" stroke-width="0.4">L1</text>
<text transform="translate(221.00,272.70) scale(0.852,1)" font-size="11.60" font-weight="normal" fill="#200020" stroke="#200020" stroke-width="0.4">L2</text>
<line x1="215.00" y1="102.70" x2="514.00" y2="102.70" stroke="#e81420" stroke-width="2.6" stroke-dasharray="4.4 2.25"/>
<line x1="215.00" y1="151.90" x2="514.00" y2="151.90" stroke="#e81420" stroke-width="2.6" stroke-dasharray="4.4 2.25"/>
<line x1="214.60" y1="102.70" x2="214.60" y2="151.60" stroke="#f02020" stroke-width="1.6" stroke-dasharray="3.3 1.6"/>
<line x1="512.90" y1="102.70" x2="512.90" y2="151.60" stroke="#f01414" stroke-width="2.2" stroke-dasharray="3.3 1.4"/>
<line x1="214.50" y1="130.10" x2="514.00" y2="130.10" stroke="#e02020" stroke-width="1.1" stroke-dasharray="1.5 2"/>
<line x1="366.10" y1="78.00" x2="366.10" y2="308.40" stroke="#d83040" stroke-width="1.4" stroke-dasharray="1.6 1.6"/>
<line x1="251.20" y1="78.50" x2="493.00" y2="187.80" stroke="#2828c0" stroke-width="1.3" stroke-dasharray="2 1.6"/>
<rect x="478.20" y="188.40" width="36.00" height="14.20" fill="#0a14f0" />
<text transform="translate(483.80,199.68) scale(1.045,1)" font-size="12.15" font-weight="normal" fill="#ffffff" >67.0</text>
<rect x="515.00" y="56.00" width="1.00" height="444.00" fill="#e8e8e8" />
<rect x="534.60" y="56.00" width="1.20" height="444.00" fill="#e8e8e8" />
<rect x="516" y="56" width="18.6" height="444" fill="url(#cbar)"/>
<rect x="536.30" y="56.00" width="0.90" height="444.00" fill="#202000" />
<rect x="537.00" y="56.00" width="20.00" height="444.00" fill="#878000" />
<rect x="536.50" y="56.00" width="14.40" height="1.20" fill="#000" />
<line x1="537.00" y1="56.50" x2="551.00" y2="56.50" stroke="#000" stroke-width="1.0" />
<line x1="537.00" y1="60.93" x2="540.50" y2="60.93" stroke="#000" stroke-width="1.0" />
<line x1="537.00" y1="65.36" x2="540.50" y2="65.36" stroke="#000" stroke-width="1.0" />
<line x1="537.00" y1="69.79" x2="540.50" y2="69.79" stroke="#000" stroke-width="1.0" />
<line x1="537.00" y1="74.22" x2="540.50" y2="74.22" stroke="#000" stroke-width="1.0" />
<line x1="537.00" y1="78.66" x2="543.00" y2="78.66" stroke="#000" stroke-width="1.0" />
<line x1="537.00" y1="83.09" x2="540.50" y2="83.09" stroke="#000" stroke-width="1.0" />
<line x1="537.00" y1="87.52" x2="540.50" y2="87.52" stroke="#000" stroke-width="1.0" />
<line x1="537.00" y1="91.95" x2="540.50" y2="91.95" stroke="#000" stroke-width="1.0" />
<line x1="537.00" y1="96.38" x2="540.50" y2="96.38" stroke="#000" stroke-width="1.0" />
<line x1="537.00" y1="100.81" x2="551.00" y2="100.81" stroke="#000" stroke-width="1.0" />
<line x1="537.00" y1="105.24" x2="540.50" y2="105.24" stroke="#000" stroke-width="1.0" />
<line x1="537.00" y1="109.67" x2="540.50" y2="109.67" stroke="#000" stroke-width="1.0" />
<line x1="537.00" y1="114.10" x2="540.50" y2="114.10" stroke="#000" stroke-width="1.0" />
<line x1="537.00" y1="118.53" x2="540.50" y2="118.53" stroke="#000" stroke-width="1.0" />
<line x1="537.00" y1="122.97" x2="543.00" y2="122.97" stroke="#000" stroke-width="1.0" />
<line x1="537.00" y1="127.40" x2="540.50" y2="127.40" stroke="#000" stroke-width="1.0" />
<line x1="537.00" y1="131.83" x2="540.50" y2="131.83" stroke="#000" stroke-width="1.0" />
<line x1="537.00" y1="136.26" x2="540.50" y2="136.26" stroke="#000" stroke-width="1.0" />
<line x1="537.00" y1="140.69" x2="540.50" y2="140.69" stroke="#000" stroke-width="1.0" />
<line x1="537.00" y1="145.12" x2="551.00" y2="145.12" stroke="#000" stroke-width="1.0" />
<line x1="537.00" y1="149.55" x2="540.50" y2="149.55" stroke="#000" stroke-width="1.0" />
<line x1="537.00" y1="153.98" x2="540.50" y2="153.98" stroke="#000" stroke-width="1.0" />
<line x1="537.00" y1="158.41" x2="540.50" y2="158.41" stroke="#000" stroke-width="1.0" />
<line x1="537.00" y1="162.84" x2="540.50" y2="162.84" stroke="#000" stroke-width="1.0" />
<line x1="537.00" y1="167.28" x2="543.00" y2="167.28" stroke="#000" stroke-width="1.0" />
<line x1="537.00" y1="171.71" x2="540.50" y2="171.71" stroke="#000" stroke-width="1.0" />
<line x1="537.00" y1="176.14" x2="540.50" y2="176.14" stroke="#000" stroke-width="1.0" />
<line x1="537.00" y1="180.57" x2="540.50" y2="180.57" stroke="#000" stroke-width="1.0" />
<line x1="537.00" y1="185.00" x2="540.50" y2="185.00" stroke="#000" stroke-width="1.0" />
<line x1="537.00" y1="189.43" x2="551.00" y2="189.43" stroke="#000" stroke-width="1.0" />
<line x1="537.00" y1="193.86" x2="540.50" y2="193.86" stroke="#000" stroke-width="1.0" />
<line x1="537.00" y1="198.29" x2="540.50" y2="198.29" stroke="#000" stroke-width="1.0" />
<line x1="537.00" y1="202.72" x2="540.50" y2="202.72" stroke="#000" stroke-width="1.0" />
<line x1="537.00" y1="207.15" x2="540.50" y2="207.15" stroke="#000" stroke-width="1.0" />
<line x1="537.00" y1="211.59" x2="543.00" y2="211.59" stroke="#000" stroke-width="1.0" />
<line x1="537.00" y1="216.02" x2="540.50" y2="216.02" stroke="#000" stroke-width="1.0" />
<line x1="537.00" y1="220.45" x2="540.50" y2="220.45" stroke="#000" stroke-width="1.0" />
<line x1="537.00" y1="224.88" x2="540.50" y2="224.88" stroke="#000" stroke-width="1.0" />
<line x1="537.00" y1="229.31" x2="540.50" y2="229.31" stroke="#000" stroke-width="1.0" />
<line x1="537.00" y1="233.74" x2="551.00" y2="233.74" stroke="#000" stroke-width="1.0" />
<line x1="537.00" y1="238.17" x2="540.50" y2="238.17" stroke="#000" stroke-width="1.0" />
<line x1="537.00" y1="242.60" x2="540.50" y2="242.60" stroke="#000" stroke-width="1.0" />
<line x1="537.00" y1="247.03" x2="540.50" y2="247.03" stroke="#000" stroke-width="1.0" />
<line x1="537.00" y1="251.46" x2="540.50" y2="251.46" stroke="#000" stroke-width="1.0" />
<line x1="537.00" y1="255.90" x2="543.00" y2="255.90" stroke="#000" stroke-width="1.0" />
<line x1="537.00" y1="260.33" x2="540.50" y2="260.33" stroke="#000" stroke-width="1.0" />
<line x1="537.00" y1="264.76" x2="540.50" y2="264.76" stroke="#000" stroke-width="1.0" />
<line x1="537.00" y1="269.19" x2="540.50" y2="269.19" stroke="#000" stroke-width="1.0" />
<line x1="537.00" y1="273.62" x2="540.50" y2="273.62" stroke="#000" stroke-width="1.0" />
<line x1="537.00" y1="278.05" x2="551.00" y2="278.05" stroke="#000" stroke-width="1.0" />
<line x1="537.00" y1="282.48" x2="540.50" y2="282.48" stroke="#000" stroke-width="1.0" />
<line x1="537.00" y1="286.91" x2="540.50" y2="286.91" stroke="#000" stroke-width="1.0" />
<line x1="537.00" y1="291.34" x2="540.50" y2="291.34" stroke="#000" stroke-width="1.0" />
<line x1="537.00" y1="295.77" x2="540.50" y2="295.77" stroke="#000" stroke-width="1.0" />
<line x1="537.00" y1="300.21" x2="543.00" y2="300.21" stroke="#000" stroke-width="1.0" />
<line x1="537.00" y1="304.64" x2="540.50" y2="304.64" stroke="#000" stroke-width="1.0" />
<line x1="537.00" y1="309.07" x2="540.50" y2="309.07" stroke="#000" stroke-width="1.0" />
<line x1="537.00" y1="313.50" x2="540.50" y2="313.50" stroke="#000" stroke-width="1.0" />
<line x1="537.00" y1="317.93" x2="540.50" y2="317.93" stroke="#000" stroke-width="1.0" />
<line x1="537.00" y1="322.36" x2="551.00" y2="322.36" stroke="#000" stroke-width="1.0" />
<line x1="537.00" y1="326.79" x2="540.50" y2="326.79" stroke="#000" stroke-width="1.0" />
<line x1="537.00" y1="331.22" x2="540.50" y2="331.22" stroke="#000" stroke-width="1.0" />
<line x1="537.00" y1="335.65" x2="540.50" y2="335.65" stroke="#000" stroke-width="1.0" />
<line x1="537.00" y1="340.08" x2="540.50" y2="340.08" stroke="#000" stroke-width="1.0" />
<line x1="537.00" y1="344.51" x2="543.00" y2="344.51" stroke="#000" stroke-width="1.0" />
<line x1="537.00" y1="348.95" x2="540.50" y2="348.95" stroke="#000" stroke-width="1.0" />
<line x1="537.00" y1="353.38" x2="540.50" y2="353.38" stroke="#000" stroke-width="1.0" />
<line x1="537.00" y1="357.81" x2="540.50" y2="357.81" stroke="#000" stroke-width="1.0" />
<line x1="537.00" y1="362.24" x2="540.50" y2="362.24" stroke="#000" stroke-width="1.0" />
<line x1="537.00" y1="366.67" x2="551.00" y2="366.67" stroke="#000" stroke-width="1.0" />
<line x1="537.00" y1="371.10" x2="540.50" y2="371.10" stroke="#000" stroke-width="1.0" />
<line x1="537.00" y1="375.53" x2="540.50" y2="375.53" stroke="#000" stroke-width="1.0" />
<line x1="537.00" y1="379.96" x2="540.50" y2="379.96" stroke="#000" stroke-width="1.0" />
<line x1="537.00" y1="384.39" x2="540.50" y2="384.39" stroke="#000" stroke-width="1.0" />
<line x1="537.00" y1="388.82" x2="543.00" y2="388.82" stroke="#000" stroke-width="1.0" />
<line x1="537.00" y1="393.26" x2="540.50" y2="393.26" stroke="#000" stroke-width="1.0" />
<line x1="537.00" y1="397.69" x2="540.50" y2="397.69" stroke="#000" stroke-width="1.0" />
<line x1="537.00" y1="402.12" x2="540.50" y2="402.12" stroke="#000" stroke-width="1.0" />
<line x1="537.00" y1="406.55" x2="540.50" y2="406.55" stroke="#000" stroke-width="1.0" />
<line x1="537.00" y1="410.98" x2="551.00" y2="410.98" stroke="#000" stroke-width="1.0" />
<line x1="537.00" y1="415.41" x2="540.50" y2="415.41" stroke="#000" stroke-width="1.0" />
<line x1="537.00" y1="419.84" x2="540.50" y2="419.84" stroke="#000" stroke-width="1.0" />
<line x1="537.00" y1="424.27" x2="540.50" y2="424.27" stroke="#000" stroke-width="1.0" />
<line x1="537.00" y1="428.70" x2="540.50" y2="428.70" stroke="#000" stroke-width="1.0" />
<line x1="537.00" y1="433.13" x2="543.00" y2="433.13" stroke="#000" stroke-width="1.0" />
<line x1="537.00" y1="437.57" x2="540.50" y2="437.57" stroke="#000" stroke-width="1.0" />
<line x1="537.00" y1="442.00" x2="540.50" y2="442.00" stroke="#000" stroke-width="1.0" />
<line x1="537.00" y1="446.43" x2="540.50" y2="446.43" stroke="#000" stroke-width="1.0" />
<line x1="537.00" y1="450.86" x2="540.50" y2="450.86" stroke="#000" stroke-width="1.0" />
<line x1="537.00" y1="455.29" x2="551.00" y2="455.29" stroke="#000" stroke-width="1.0" />
<line x1="537.00" y1="459.72" x2="540.50" y2="459.72" stroke="#000" stroke-width="1.0" />
<line x1="537.00" y1="464.15" x2="540.50" y2="464.15" stroke="#000" stroke-width="1.0" />
<line x1="537.00" y1="468.58" x2="540.50" y2="468.58" stroke="#000" stroke-width="1.0" />
<line x1="537.00" y1="473.01" x2="540.50" y2="473.01" stroke="#000" stroke-width="1.0" />
<line x1="537.00" y1="477.44" x2="543.00" y2="477.44" stroke="#000" stroke-width="1.0" />
<line x1="537.00" y1="481.88" x2="540.50" y2="481.88" stroke="#000" stroke-width="1.0" />
<line x1="537.00" y1="486.31" x2="540.50" y2="486.31" stroke="#000" stroke-width="1.0" />
<line x1="537.00" y1="490.74" x2="540.50" y2="490.74" stroke="#000" stroke-width="1.0" />
<line x1="537.00" y1="495.17" x2="540.50" y2="495.17" stroke="#000" stroke-width="1.0" />
<line x1="537.00" y1="499.60" x2="551.00" y2="499.60" stroke="#000" stroke-width="1.0" />
<text transform="translate(543.60,84.51) rotate(90)" font-size="13" fill="#000" stroke="#000" stroke-width="0.25">90</text>
<text transform="translate(543.60,128.82) rotate(90)" font-size="13" fill="#000" stroke="#000" stroke-width="0.25">80</text>
<text transform="translate(543.60,173.13) rotate(90)" font-size="13" fill="#000" stroke="#000" stroke-width="0.25">70</text>
<text transform="translate(543.60,217.44) rotate(90)" font-size="13" fill="#000" stroke="#000" stroke-width="0.25">60</text>
<text transform="translate(543.60,261.75) rotate(90)" font-size="13" fill="#000" stroke="#000" stroke-width="0.25">50</text>
<text transform="translate(543.60,306.06) rotate(90)" font-size="13" fill="#000" stroke="#000" stroke-width="0.25">40</text>
<text transform="translate(543.60,350.37) rotate(90)" font-size="13" fill="#000" stroke="#000" stroke-width="0.25">30</text>
<text transform="translate(543.60,394.68) rotate(90)" font-size="13" fill="#000" stroke="#000" stroke-width="0.25">20</text>
<text transform="translate(543.60,438.99) rotate(90)" font-size="13" fill="#000" stroke="#000" stroke-width="0.25">10</text>
<text transform="translate(543.60,490.10) rotate(90)" font-size="13" fill="#000" stroke="#000" stroke-width="0.25">0</text>
<rect x="0.00" y="311.00" width="20.20" height="166.00" fill="#878000" />
<rect x="21.00" y="309.20" width="1.40" height="171.00" fill="#f4f4f4" />
<rect x="21.00" y="478.80" width="493.40" height="1.40" fill="#f4f4f4" />
<line x1="16.60" y1="312.23" x2="20.20" y2="312.23" stroke="#000" stroke-width="1.1" />
<line x1="16.60" y1="315.30" x2="20.20" y2="315.30" stroke="#000" stroke-width="1.1" />
<line x1="16.60" y1="318.38" x2="20.20" y2="318.38" stroke="#000" stroke-width="1.1" />
<line x1="16.60" y1="321.46" x2="20.20" y2="321.46" stroke="#000" stroke-width="1.1" />
<line x1="16.60" y1="324.54" x2="20.20" y2="324.54" stroke="#000" stroke-width="1.1" />
<line x1="16.60" y1="327.61" x2="20.20" y2="327.61" stroke="#000" stroke-width="1.1" />
<line x1="16.60" y1="330.69" x2="20.20" y2="330.69" stroke="#000" stroke-width="1.1" />
<line x1="16.60" y1="333.77" x2="20.20" y2="333.77" stroke="#000" stroke-width="1.1" />
<line x1="16.60" y1="336.85" x2="20.20" y2="336.85" stroke="#000" stroke-width="1.1" />
<line x1="16.60" y1="339.92" x2="20.20" y2="339.92" stroke="#000" stroke-width="1.1" />
<line x1="14.20" y1="326.07" x2="20.20" y2="326.07" stroke="#000" stroke-width="1.1" />
<line x1="6.70" y1="343.00" x2="20.20" y2="343.00" stroke="#000" stroke-width="1.1" />
<line x1="16.60" y1="346.08" x2="20.20" y2="346.08" stroke="#000" stroke-width="1.1" />
<line x1="16.60" y1="349.15" x2="20.20" y2="349.15" stroke="#000" stroke-width="1.1" />
<line x1="16.60" y1="352.23" x2="20.20" y2="352.23" stroke="#000" stroke-width="1.1" />
<line x1="16.60" y1="355.31" x2="20.20" y2="355.31" stroke="#000" stroke-width="1.1" />
<line x1="16.60" y1="358.39" x2="20.20" y2="358.39" stroke="#000" stroke-width="1.1" />
<line x1="16.60" y1="361.46" x2="20.20" y2="361.46" stroke="#000" stroke-width="1.1" />
<line x1="16.60" y1="364.54" x2="20.20" y2="364.54" stroke="#000" stroke-width="1.1" />
<line x1="16.60" y1="367.62" x2="20.20" y2="367.62" stroke="#000" stroke-width="1.1" />
<line x1="16.60" y1="370.70" x2="20.20" y2="370.70" stroke="#000" stroke-width="1.1" />
<line x1="16.60" y1="373.77" x2="20.20" y2="373.77" stroke="#000" stroke-width="1.1" />
<line x1="14.20" y1="359.93" x2="20.20" y2="359.93" stroke="#000" stroke-width="1.1" />
<line x1="6.70" y1="376.85" x2="20.20" y2="376.85" stroke="#000" stroke-width="1.1" />
<line x1="16.60" y1="379.93" x2="20.20" y2="379.93" stroke="#000" stroke-width="1.1" />
<line x1="16.60" y1="383.00" x2="20.20" y2="383.00" stroke="#000" stroke-width="1.1" />
<line x1="16.60" y1="386.08" x2="20.20" y2="386.08" stroke="#000" stroke-width="1.1" />
<line x1="16.60" y1="389.16" x2="20.20" y2="389.16" stroke="#000" stroke-width="1.1" />
<line x1="16.60" y1="392.24" x2="20.20" y2="392.24" stroke="#000" stroke-width="1.1" />
<line x1="16.60" y1="395.31" x2="20.20" y2="395.31" stroke="#000" stroke-width="1.1" />
<line x1="16.60" y1="398.39" x2="20.20" y2="398.39" stroke="#000" stroke-width="1.1" />
<line x1="16.60" y1="401.47" x2="20.20" y2="401.47" stroke="#000" stroke-width="1.1" />
<line x1="16.60" y1="404.55" x2="20.20" y2="404.55" stroke="#000" stroke-width="1.1" />
<line x1="16.60" y1="407.62" x2="20.20" y2="407.62" stroke="#000" stroke-width="1.1" />
<line x1="14.20" y1="393.78" x2="20.20" y2="393.78" stroke="#000" stroke-width="1.1" />
<line x1="6.70" y1="410.70" x2="20.20" y2="410.70" stroke="#000" stroke-width="1.1" />
<line x1="16.60" y1="413.78" x2="20.20" y2="413.78" stroke="#000" stroke-width="1.1" />
<line x1="16.60" y1="416.85" x2="20.20" y2="416.85" stroke="#000" stroke-width="1.1" />
<line x1="16.60" y1="419.93" x2="20.20" y2="419.93" stroke="#000" stroke-width="1.1" />
<line x1="16.60" y1="423.01" x2="20.20" y2="423.01" stroke="#000" stroke-width="1.1" />
<line x1="16.60" y1="426.09" x2="20.20" y2="426.09" stroke="#000" stroke-width="1.1" />
<line x1="16.60" y1="429.16" x2="20.20" y2="429.16" stroke="#000" stroke-width="1.1" />
<line x1="16.60" y1="432.24" x2="20.20" y2="432.24" stroke="#000" stroke-width="1.1" />
<line x1="16.60" y1="435.32" x2="20.20" y2="435.32" stroke="#000" stroke-width="1.1" />
<line x1="16.60" y1="438.40" x2="20.20" y2="438.40" stroke="#000" stroke-width="1.1" />
<line x1="16.60" y1="441.47" x2="20.20" y2="441.47" stroke="#000" stroke-width="1.1" />
<line x1="14.20" y1="427.62" x2="20.20" y2="427.62" stroke="#000" stroke-width="1.1" />
<line x1="6.70" y1="444.55" x2="20.20" y2="444.55" stroke="#000" stroke-width="1.1" />
<line x1="16.60" y1="447.63" x2="20.20" y2="447.63" stroke="#000" stroke-width="1.1" />
<line x1="16.60" y1="450.70" x2="20.20" y2="450.70" stroke="#000" stroke-width="1.1" />
<line x1="16.60" y1="453.78" x2="20.20" y2="453.78" stroke="#000" stroke-width="1.1" />
<line x1="16.60" y1="456.86" x2="20.20" y2="456.86" stroke="#000" stroke-width="1.1" />
<line x1="16.60" y1="459.94" x2="20.20" y2="459.94" stroke="#000" stroke-width="1.1" />
<line x1="16.60" y1="463.01" x2="20.20" y2="463.01" stroke="#000" stroke-width="1.1" />
<line x1="16.60" y1="466.09" x2="20.20" y2="466.09" stroke="#000" stroke-width="1.1" />
<line x1="16.60" y1="469.17" x2="20.20" y2="469.17" stroke="#000" stroke-width="1.1" />
<line x1="16.60" y1="472.25" x2="20.20" y2="472.25" stroke="#000" stroke-width="1.1" />
<line x1="16.60" y1="475.32" x2="20.20" y2="475.32" stroke="#000" stroke-width="1.1" />
<line x1="14.20" y1="461.48" x2="20.20" y2="461.48" stroke="#000" stroke-width="1.1" />
<text transform="translate(2.20,322.80) rotate(90)" font-size="13" fill="#000" stroke="#000" stroke-width="0.25">0.0</text>
<text transform="translate(2.20,356.65) rotate(90)" font-size="13" fill="#000" stroke="#000" stroke-width="0.25">-10</text>
<text transform="translate(2.20,390.50) rotate(90)" font-size="13" fill="#000" stroke="#000" stroke-width="0.25">-20</text>
<text transform="translate(2.20,424.35) rotate(90)" font-size="13" fill="#000" stroke="#000" stroke-width="0.25">-30</text>
<text transform="translate(2.20,458.20) rotate(90)" font-size="13" fill="#000" stroke="#000" stroke-width="0.25">-40</text>
<line x1="72.60" y1="311.00" x2="72.60" y2="479.00" stroke="#1a7e1a" stroke-width="1" stroke-dasharray="1.2 2.2"/>
<line x1="121.70" y1="311.00" x2="121.70" y2="479.00" stroke="#1a7e1a" stroke-width="1" stroke-dasharray="1.2 2.2"/>
<line x1="170.80" y1="311.00" x2="170.80" y2="479.00" stroke="#1a7e1a" stroke-width="1" stroke-dasharray="1.2 2.2"/>
<line x1="219.90" y1="311.00" x2="219.90" y2="479.00" stroke="#1a7e1a" stroke-width="1" stroke-dasharray="1.2 2.2"/>
<line x1="269.00" y1="311.00" x2="269.00" y2="479.00" stroke="#1a7e1a" stroke-width="1" stroke-dasharray="1.2 2.2"/>
<line x1="318.10" y1="311.00" x2="318.10" y2="479.00" stroke="#1a7e1a" stroke-width="1" stroke-dasharray="1.2 2.2"/>
<line x1="367.20" y1="311.00" x2="367.20" y2="479.00" stroke="#1a7e1a" stroke-width="1" stroke-dasharray="1.2 2.2"/>
<line x1="416.30" y1="311.00" x2="416.30" y2="479.00" stroke="#1a7e1a" stroke-width="1" stroke-dasharray="1.2 2.2"/>
<line x1="465.40" y1="311.00" x2="465.40" y2="479.00" stroke="#1a7e1a" stroke-width="1" stroke-dasharray="1.2 2.2"/>
<line x1="22.50" y1="343.20" x2="514.00" y2="343.20" stroke="#1a7e1a" stroke-width="1" stroke-dasharray="1.2 2.2"/>
<line x1="22.50" y1="376.80" x2="514.00" y2="376.80" stroke="#1a7e1a" stroke-width="1" stroke-dasharray="1.2 2.2"/>
<line x1="22.50" y1="410.40" x2="514.00" y2="410.40" stroke="#1a7e1a" stroke-width="1" stroke-dasharray="1.2 2.2"/>
<line x1="22.50" y1="444.00" x2="514.00" y2="444.00" stroke="#1a7e1a" stroke-width="1" stroke-dasharray="1.2 2.2"/>
<rect x="22.50" y="480.60" width="491.70" height="19.60" fill="#008400" />
<rect x="22.50" y="480.60" width="491.70" height="1.00" fill="#000" />
<line x1="23.50" y1="481.00" x2="23.50" y2="494.00" stroke="#000" stroke-width="1.0" />
<line x1="28.41" y1="481.00" x2="28.41" y2="484.00" stroke="#000" stroke-width="1.0" />
<line x1="33.32" y1="481.00" x2="33.32" y2="484.00" stroke="#000" stroke-width="1.0" />
<line x1="38.23" y1="481.00" x2="38.23" y2="484.00" stroke="#000" stroke-width="1.0" />
<line x1="43.14" y1="481.00" x2="43.14" y2="484.00" stroke="#000" stroke-width="1.0" />
<line x1="48.05" y1="481.00" x2="48.05" y2="487.00" stroke="#000" stroke-width="1.0" />
<line x1="52.95" y1="481.00" x2="52.95" y2="484.00" stroke="#000" stroke-width="1.0" />
<line x1="57.86" y1="481.00" x2="57.86" y2="484.00" stroke="#000" stroke-width="1.0" />
<line x1="62.77" y1="481.00" x2="62.77" y2="484.00" stroke="#000" stroke-width="1.0" />
<line x1="67.68" y1="481.00" x2="67.68" y2="484.00" stroke="#000" stroke-width="1.0" />
<line x1="72.59" y1="481.00" x2="72.59" y2="494.00" stroke="#000" stroke-width="1.0" />
<line x1="77.50" y1="481.00" x2="77.50" y2="484.00" stroke="#000" stroke-width="1.0" />
<line x1="82.41" y1="481.00" x2="82.41" y2="484.00" stroke="#000" stroke-width="1.0" />
<line x1="87.32" y1="481.00" x2="87.32" y2="484.00" stroke="#000" stroke-width="1.0" />
<line x1="92.23" y1="481.00" x2="92.23" y2="484.00" stroke="#000" stroke-width="1.0" />
<line x1="97.13" y1="481.00" x2="97.13" y2="487.00" stroke="#000" stroke-width="1.0" />
<line x1="102.04" y1="481.00" x2="102.04" y2="484.00" stroke="#000" stroke-width="1.0" />
<line x1="106.95" y1="481.00" x2="106.95" y2="484.00" stroke="#000" stroke-width="1.0" />
<line x1="111.86" y1="481.00" x2="111.86" y2="484.00" stroke="#000" stroke-width="1.0" />
<line x1="116.77" y1="481.00" x2="116.77" y2="484.00" stroke="#000" stroke-width="1.0" />
<line x1="121.68" y1="481.00" x2="121.68" y2="494.00" stroke="#000" stroke-width="1.0" />
<line x1="126.59" y1="481.00" x2="126.59" y2="484.00" stroke="#000" stroke-width="1.0" />
<line x1="131.50" y1="481.00" x2="131.50" y2="484.00" stroke="#000" stroke-width="1.0" />
<line x1="136.41" y1="481.00" x2="136.41" y2="484.00" stroke="#000" stroke-width="1.0" />
<line x1="141.32" y1="481.00" x2="141.32" y2="484.00" stroke="#000" stroke-width="1.0" />
<line x1="146.22" y1="481.00" x2="146.22" y2="487.00" stroke="#000" stroke-width="1.0" />
<line x1="151.13" y1="481.00" x2="151.13" y2="484.00" stroke="#000" stroke-width="1.0" />
<line x1="156.04" y1="481.00" x2="156.04" y2="484.00" stroke="#000" stroke-width="1.0" />
<line x1="160.95" y1="481.00" x2="160.95" y2="484.00" stroke="#000" stroke-width="1.0" />
<line x1="165.86" y1="481.00" x2="165.86" y2="484.00" stroke="#000" stroke-width="1.0" />
<line x1="170.77" y1="481.00" x2="170.77" y2="494.00" stroke="#000" stroke-width="1.0" />
<line x1="175.68" y1="481.00" x2="175.68" y2="484.00" stroke="#000" stroke-width="1.0" />
<line x1="180.59" y1="481.00" x2="180.59" y2="484.00" stroke="#000" stroke-width="1.0" />
<line x1="185.50" y1="481.00" x2="185.50" y2="484.00" stroke="#000" stroke-width="1.0" />
<line x1="190.41" y1="481.00" x2="190.41" y2="484.00" stroke="#000" stroke-width="1.0" />
<line x1="195.31" y1="481.00" x2="195.31" y2="487.00" stroke="#000" stroke-width="1.0" />
<line x1="200.22" y1="481.00" x2="200.22" y2="484.00" stroke="#000" stroke-width="1.0" />
<line x1="205.13" y1="481.00" x2="205.13" y2="484.00" stroke="#000" stroke-width="1.0" />
<line x1="210.04" y1="481.00" x2="210.04" y2="484.00" stroke="#000" stroke-width="1.0" />
<line x1="214.95" y1="481.00" x2="214.95" y2="484.00" stroke="#000" stroke-width="1.0" />
<line x1="219.86" y1="481.00" x2="219.86" y2="494.00" stroke="#000" stroke-width="1.0" />
<line x1="224.77" y1="481.00" x2="224.77" y2="484.00" stroke="#000" stroke-width="1.0" />
<line x1="229.68" y1="481.00" x2="229.68" y2="484.00" stroke="#000" stroke-width="1.0" />
<line x1="234.59" y1="481.00" x2="234.59" y2="484.00" stroke="#000" stroke-width="1.0" />
<line x1="239.50" y1="481.00" x2="239.50" y2="484.00" stroke="#000" stroke-width="1.0" />
<line x1="244.41" y1="481.00" x2="244.41" y2="487.00" stroke="#000" stroke-width="1.0" />
<line x1="249.31" y1="481.00" x2="249.31" y2="484.00" stroke="#000" stroke-width="1.0" />
<line x1="254.22" y1="481.00" x2="254.22" y2="484.00" stroke="#000" stroke-width="1.0" />
<line x1="259.13" y1="481.00" x2="259.13" y2="484.00" stroke="#000" stroke-width="1.0" />
<line x1="264.04" y1="481.00" x2="264.04" y2="484.00" stroke="#000" stroke-width="1.0" />
<line x1="268.95" y1="481.00" x2="268.95" y2="494.00" stroke="#000" stroke-width="1.0" />
<line x1="273.86" y1="481.00" x2="273.86" y2="484.00" stroke="#000" stroke-width="1.0" />
<line x1="278.77" y1="481.00" x2="278.77" y2="484.00" stroke="#000" stroke-width="1.0" />
<line x1="283.68" y1="481.00" x2="283.68" y2="484.00" stroke="#000" stroke-width="1.0" />
<line x1="288.59" y1="481.00" x2="288.59" y2="484.00" stroke="#000" stroke-width="1.0" />
<line x1="293.50" y1="481.00" x2="293.50" y2="487.00" stroke="#000" stroke-width="1.0" />
<line x1="298.40" y1="481.00" x2="298.40" y2="484.00" stroke="#000" stroke-width="1.0" />
<line x1="303.31" y1="481.00" x2="303.31" y2="484.00" stroke="#000" stroke-width="1.0" />
<line x1="308.22" y1="481.00" x2="308.22" y2="484.00" stroke="#000" stroke-width="1.0" />
<line x1="313.13" y1="481.00" x2="313.13" y2="484.00" stroke="#000" stroke-width="1.0" />
<line x1="318.04" y1="481.00" x2="318.04" y2="494.00" stroke="#000" stroke-width="1.0" />
<line x1="322.95" y1="481.00" x2="322.95" y2="484.00" stroke="#000" stroke-width="1.0" />
<line x1="327.86" y1="481.00" x2="327.86" y2="484.00" stroke="#000" stroke-width="1.0" />
<line x1="332.77" y1="481.00" x2="332.77" y2="484.00" stroke="#000" stroke-width="1.0" />
<line x1="337.68" y1="481.00" x2="337.68" y2="484.00" stroke="#000" stroke-width="1.0" />
<line x1="342.58" y1="481.00" x2="342.58" y2="487.00" stroke="#000" stroke-width="1.0" />
<line x1="347.49" y1="481.00" x2="347.49" y2="484.00" stroke="#000" stroke-width="1.0" />
<line x1="352.40" y1="481.00" x2="352.40" y2="484.00" stroke="#000" stroke-width="1.0" />
<line x1="357.31" y1="481.00" x2="357.31" y2="484.00" stroke="#000" stroke-width="1.0" />
<line x1="362.22" y1="481.00" x2="362.22" y2="484.00" stroke="#000" stroke-width="1.0" />
<line x1="367.13" y1="481.00" x2="367.13" y2="494.00" stroke="#000" stroke-width="1.0" />
<line x1="372.04" y1="481.00" x2="372.04" y2="484.00" stroke="#000" stroke-width="1.0" />
<line x1="376.95" y1="481.00" x2="376.95" y2="484.00" stroke="#000" stroke-width="1.0" />
<line x1="381.86" y1="481.00" x2="381.86" y2="484.00" stroke="#000" stroke-width="1.0" />
<line x1="386.77" y1="481.00" x2="386.77" y2="484.00" stroke="#000" stroke-width="1.0" />
<line x1="391.68" y1="481.00" x2="391.68" y2="487.00" stroke="#000" stroke-width="1.0" />
<line x1="396.58" y1="481.00" x2="396.58" y2="484.00" stroke="#000" stroke-width="1.0" />
<line x1="401.49" y1="481.00" x2="401.49" y2="484.00" stroke="#000" stroke-width="1.0" />
<line x1="406.40" y1="481.00" x2="406.40" y2="484.00" stroke="#000" stroke-width="1.0" />
<line x1="411.31" y1="481.00" x2="411.31" y2="484.00" stroke="#000" stroke-width="1.0" />
<line x1="416.22" y1="481.00" x2="416.22" y2="494.00" stroke="#000" stroke-width="1.0" />
<line x1="421.13" y1="481.00" x2="421.13" y2="484.00" stroke="#000" stroke-width="1.0" />
<line x1="426.04" y1="481.00" x2="426.04" y2="484.00" stroke="#000" stroke-width="1.0" />
<line x1="430.95" y1="481.00" x2="430.95" y2="484.00" stroke="#000" stroke-width="1.0" />
<line x1="435.86" y1="481.00" x2="435.86" y2="484.00" stroke="#000" stroke-width="1.0" />
<line x1="440.76" y1="481.00" x2="440.76" y2="487.00" stroke="#000" stroke-width="1.0" />
<line x1="445.67" y1="481.00" x2="445.67" y2="484.00" stroke="#000" stroke-width="1.0" />
<line x1="450.58" y1="481.00" x2="450.58" y2="484.00" stroke="#000" stroke-width="1.0" />
<line x1="455.49" y1="481.00" x2="455.49" y2="484.00" stroke="#000" stroke-width="1.0" />
<line x1="460.40" y1="481.00" x2="460.40" y2="484.00" stroke="#000" stroke-width="1.0" />
<line x1="465.31" y1="481.00" x2="465.31" y2="494.00" stroke="#000" stroke-width="1.0" />
<line x1="470.22" y1="481.00" x2="470.22" y2="484.00" stroke="#000" stroke-width="1.0" />
<line x1="475.13" y1="481.00" x2="475.13" y2="484.00" stroke="#000" stroke-width="1.0" />
<line x1="480.04" y1="481.00" x2="480.04" y2="484.00" stroke="#000" stroke-width="1.0" />
<line x1="484.95" y1="481.00" x2="484.95" y2="484.00" stroke="#000" stroke-width="1.0" />
<line x1="489.85" y1="481.00" x2="489.85" y2="487.00" stroke="#000" stroke-width="1.0" />
<line x1="494.76" y1="481.00" x2="494.76" y2="484.00" stroke="#000" stroke-width="1.0" />
<line x1="499.67" y1="481.00" x2="499.67" y2="484.00" stroke="#000" stroke-width="1.0" />
<line x1="504.58" y1="481.00" x2="504.58" y2="484.00" stroke="#000" stroke-width="1.0" />
<line x1="509.49" y1="481.00" x2="509.49" y2="484.00" stroke="#000" stroke-width="1.0" />
<text x="25.00" y="497.50" font-size="12" fill="#000" text-anchor="start" stroke="#000" stroke-width="0.25">30</text>
<text x="74.09" y="497.50" font-size="12" fill="#000" text-anchor="start" stroke="#000" stroke-width="0.25">35</text>
<text x="123.18" y="497.50" font-size="12" fill="#000" text-anchor="start" stroke="#000" stroke-width="0.25">40</text>
<text x="172.27" y="497.50" font-size="12" fill="#000" text-anchor="start" stroke="#000" stroke-width="0.25">45</text>
<text x="221.36" y="497.50" font-size="12" fill="#000" text-anchor="start" stroke="#000" stroke-width="0.25">50</text>
<text x="270.45" y="497.50" font-size="12" fill="#000" text-anchor="start" stroke="#000" stroke-width="0.25">55</text>
<text x="319.54" y="497.50" font-size="12" fill="#000" text-anchor="start" stroke="#000" stroke-width="0.25">60</text>
<text x="368.63" y="497.50" font-size="12" fill="#000" text-anchor="start" stroke="#000" stroke-width="0.25">65</text>
<text x="417.72" y="497.50" font-size="12" fill="#000" text-anchor="start" stroke="#000" stroke-width="0.25">70</text>
<text x="466.81" y="497.50" font-size="12" fill="#000" text-anchor="start" stroke="#000" stroke-width="0.25">75</text>
<text transform="translate(29.70,331.38) scale(1.107,1)" font-size="12.43" font-weight="normal" fill="#dcdcdc" >КАЛИБРОВКА : ОТРАЖАТЕЛЬ 1 ГЛУБИНА 7.0 мм</text>
<polyline points="72.3,351.3 102.6,350.9 122.8,349.0 143.0,348.4 163.0,346.8 182.0,346.1 201.0,345.2 220.0,343.9 260.5,343.9 280.7,345.2 301.0,346.1 316.6,347.5 334.5,348.6 354.7,349.7 366.0,350.6 385.0,356.6 398.8,360.0 414.5,366.4 428.2,375.0 465.5,395.8" fill="none" stroke="#38c8d0" stroke-width="1.3"/>
<line x1="385.80" y1="311.00" x2="385.80" y2="478.80" stroke="#c82030" stroke-width="1.4" stroke-dasharray="1.6 1.6"/>
<path d="M380.8,357.6 A5,5 0 0 1 391,356.2 L385.9,363.6 Z" fill="none" stroke="#e02020" stroke-width="1.3" stroke-linejoin="round"/>
</svg>
</body></html>
